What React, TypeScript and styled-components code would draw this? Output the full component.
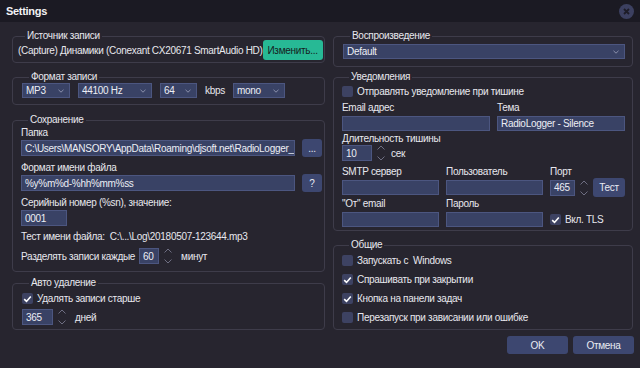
import React from 'react';
import styled, { createGlobalStyle } from 'styled-components';

const GlobalStyle = createGlobalStyle`
  html, body {
    margin: 0;
    padding: 0;
    background: #27252f;
  }
  body {
    font-family: 'Liberation Sans', Arial, sans-serif;
    font-size: 10px;
    letter-spacing: -0.3px;
    color: #e8e8ee;
  }
`;

const Window = styled.div`
  width: 640px;
  height: 368px;
  display: flex;
  flex-direction: column;
  background: #27252f;
  overflow: hidden;
`;

const TitleBar = styled.div`
  height: 22px;
  flex: none;
  display: flex;
  align-items: center;
  justify-content: space-between;
  padding: 0 6px 0 6px;
  background: #1b1a23;
`;

const Title = styled.span`
  font-size: 11px;
  font-weight: bold;
  letter-spacing: -0.3px;
  color: #f2f2f5;
`;

const CloseButton = styled.div`
  width: 15px;
  height: 15px;
  border-radius: 50%;
  background: #3c4060;
  display: flex;
  align-items: center;
  justify-content: center;
`;

const Content = styled.div`
  display: flex;
  gap: 8px;
  padding: 9px 7px 0 12px;
`;

const Column = styled.div<{ $w: number }>`
  width: ${(p) => p.$w}px;
  flex: none;
  display: flex;
  flex-direction: column;
`;

const Group = styled.fieldset<{ $mt?: number; $pad: string }>`
  margin: ${(p) => p.$mt ?? 0}px 0 0 0;
  padding: ${(p) => p.$pad};
  border: 1px solid #3e3c4a;
  border-radius: 4px;
  min-width: 0;
`;

const Legend = styled.legend`
  padding: 0 2px;
  margin-left: 7px;
  line-height: 10px;
  color: #e8e8ee;
`;

const Row = styled.div<{ $gap?: number; $mt?: number; $h?: number }>`
  display: flex;
  align-items: center;
  gap: ${(p) => p.$gap ?? 0}px;
  margin-top: ${(p) => p.$mt ?? 0}px;
  ${(p) => (p.$h ? `height: ${p.$h}px;` : '')}
`;

const Label = styled.div<{ $mt?: number }>`
  line-height: 13px;
  margin-top: ${(p) => p.$mt ?? 0}px;
  white-space: nowrap;
`;

const Text = styled.span<{ $ml?: number }>`
  margin-left: ${(p) => p.$ml ?? 0}px;
  line-height: 13px;
  white-space: nowrap;
`;

const Spacer = styled.div`
  flex: 1;
`;

const Field = styled.div<{ $w?: number; $h?: number; $mt?: number }>`
  box-sizing: border-box;
  ${(p) => (p.$w ? `width: ${p.$w}px; flex: none;` : 'flex: 1; min-width: 0;')}
  height: ${(p) => p.$h ?? 16}px;
  margin-top: ${(p) => p.$mt ?? 0}px;
  background: #394265;
  border: 1px solid #4c5680;
  padding: 0 3px;
  display: flex;
  align-items: center;
  color: #eceef4;
  white-space: nowrap;
  overflow: hidden;
`;

const SelectBox = styled(Field)`
  justify-content: space-between;
  padding: 0 5px 0 3px;
`;

const Button = styled.div<{ $w: number; $h: number; $teal?: boolean }>`
  width: ${(p) => p.$w}px;
  height: ${(p) => p.$h}px;
  flex: none;
  border-radius: 3px;
  background: ${(p) => (p.$teal ? '#27b995' : '#3d4770')};
  color: ${(p) => (p.$teal ? '#16201d' : '#e8eaf2')};
  display: flex;
  align-items: center;
  justify-content: center;
`;

const Arrows = styled.div`
  width: 8px;
  height: 16px;
  margin-left: 5px;
  display: flex;
  flex-direction: column;
  justify-content: space-between;
  align-items: center;
  flex: none;
`;

const Box = styled.div`
  width: 11px;
  height: 11px;
  border-radius: 2px;
  background: #3d4262;
  flex: none;
  display: flex;
  align-items: center;
  justify-content: center;
`;

const FieldGrid = styled.div<{ $cols: string; $mt?: number }>`
  display: grid;
  grid-template-columns: ${(p) => p.$cols};
  column-gap: 7px;
  align-items: center;
  margin-top: ${(p) => p.$mt ?? 0}px;
`;

const Footer = styled.div`
  display: flex;
  justify-content: flex-end;
  gap: 5px;
  padding: 6px 6px 0 0;
`;

const Chevron = () => (
  <svg width="6" height="4" viewBox="0 0 6 4">
    <path d="M0.5 0.8 L3 3.2 L5.5 0.8" stroke="#8a90ab" strokeWidth="1" fill="none" />
  </svg>
);

const Spinner = ({ value, w }: { value: string; w: number }) => (
  <>
    <Field $w={w}>{value}</Field>
    <Arrows>
      <svg width="8" height="5" viewBox="0 0 8 5">
        <path d="M0.5 4.5 L4 1 L7.5 4.5" stroke="#6e6e82" strokeWidth="1" fill="none" />
      </svg>
      <svg width="8" height="5" viewBox="0 0 8 5">
        <path d="M0.5 0.5 L4 4 L7.5 0.5" stroke="#6e6e82" strokeWidth="1" fill="none" />
      </svg>
    </Arrows>
  </>
);

const Check = ({ on }: { on?: boolean }) => (
  <Box>
    {on && (
      <svg width="9" height="8" viewBox="0 0 9 8">
        <path d="M1.2 4.2 L3.5 6.4 L7.8 1.4" stroke="#ffffff" strokeWidth="1.6" fill="none" />
      </svg>
    )}
  </Box>
);

const Select = ({ value, w }: { value: string; w?: number }) => (
  <SelectBox $w={w} $h={15}>
    <span>{value}</span>
    <Chevron />
  </SelectBox>
);

const App: React.FC = () => {
  return (
    <Window>
      <GlobalStyle />
      <TitleBar>
        <Title>Settings</Title>
        <CloseButton>
          <svg width="7" height="7" viewBox="0 0 7 7">
            <path d="M1 1 L6 6 M6 1 L1 6" stroke="#1d1c27" strokeWidth="1.8" />
          </svg>
        </CloseButton>
      </TitleBar>
      <Content>
        <Column $w={313}>
          <Group $pad="0 2px 2px 5px">
            <Legend>Источник записи</Legend>
            <Row $mt={-1}>
              <Text>(Capture) Динамики (Conexant CX20671 SmartAudio HD)</Text>
              <Spacer />
              <Button $w={60} $h={20} $teal>
                Изменить...
              </Button>
            </Row>
          </Group>

          <Group $mt={9} $pad="1px 8px 6px 9px">
            <Legend>Формат записи</Legend>
            <Row $gap={8}>
              <Select value="MP3" w={48} />
              <Select value="44100 Hz" w={74} />
              <Select value="64" w={37} />
              <Text>kbps</Text>
              <Select value="mono" w={52} />
            </Row>
          </Group>

          <Group $mt={10} $pad="1px 2px 7px 8px">
            <Legend>Сохранение</Legend>
            <Label>Папка</Label>
            <Row $gap={7} $h={18}>
              <Field>C:\Users\MANSORY\AppData\Roaming\djsoft.net\RadioLogger_1192</Field>
              <Button $w={20} $h={18}>
                ...
              </Button>
            </Row>
            <Label $mt={4}>Формат имени файла</Label>
            <Row $gap={7} $h={18}>
              <Field>%y%m%d-%hh%mm%ss</Field>
              <Button $w={20} $h={18}>
                ?
              </Button>
            </Row>
            <Label $mt={4}>Серийный номер (%sn), значение:</Label>
            <Field $w={46} $mt={1}>
              0001
            </Field>
            <Label $mt={4}>Тест имени файла:&nbsp; C:\...\Log\20180507-123644.mp3</Label>
            <Row $mt={5}>
              <Text>Разделять записи каждые</Text>
              <Text $ml={4} />
              <Spinner value="60" w={20} />
              <Text $ml={9}>минут</Text>
            </Row>
          </Group>

          <Group $mt={6} $pad="4px 2px 4px 9px">
            <Legend>Авто удаление</Legend>
            <Row $gap={4}>
              <Check on />
              <Text>Удалять записи старше</Text>
            </Row>
            <Row $mt={4}>
              <Spinner value="365" w={31} />
              <Text $ml={9}>дней</Text>
            </Row>
          </Group>
        </Column>

        <Column $w={300}>
          <Group $pad="3px 7px 7px 9px">
            <Legend>Воспроизведение</Legend>
            <Select value="Default" />
          </Group>

          <Group $mt={5} $pad="3px 7px 3px 8px">
            <Legend>Уведомления</Legend>
            <Row $gap={4}>
              <Check />
              <Text>Отправлять уведомление при тишине</Text>
            </Row>
            <FieldGrid $cols="148px 1fr" $mt={3}>
              <Label>Email адрес</Label>
              <Label>Тема</Label>
              <Field $h={15} $mt={2} />
              <Field $h={15} $mt={2}>
                RadioLogger - Silence
              </Field>
            </FieldGrid>
            <Label $mt={1}>Длительность тишины</Label>
            <Row>
              <Spinner value="10" w={30} />
              <Text $ml={6}>сек</Text>
            </Row>
            <FieldGrid $cols="97px 97px 1fr" $mt={4}>
              <Label>SMTP сервер</Label>
              <Label>Пользователь</Label>
              <Label>Порт</Label>
              <Field $h={15} />
              <Field $h={15} />
              <Row>
                <Spinner value="465" w={25} />
                <Spacer />
                <Button $w={32} $h={19}>
                  Тест
                </Button>
              </Row>
              <Label>"От" email</Label>
              <Label>Пароль</Label>
              <div />
              <Field $h={15} $mt={2} />
              <Field $h={15} $mt={2} />
              <Row $gap={4} $mt={2}>
                <Check on />
                <Text>Вкл. TLS</Text>
              </Row>
            </FieldGrid>
          </Group>

          <Group $mt={9} $pad="1px 7px 2px 8px">
            <Legend>Общие</Legend>
            <Row $gap={4} $h={19}>
              <Check />
              <Text>Запускать с&nbsp; Windows</Text>
            </Row>
            <Row $gap={4} $h={19}>
              <Check on />
              <Text>Спрашивать при закрытии</Text>
            </Row>
            <Row $gap={4} $h={19}>
              <Check on />
              <Text>Кнопка на панели задач</Text>
            </Row>
            <Row $gap={4} $h={19}>
              <Check />
              <Text>Перезапуск при зависании или ошибке</Text>
            </Row>
          </Group>
        </Column>
      </Content>
      <Footer>
        <Button $w={61} $h={18}>
          OK
        </Button>
        <Button $w={61} $h={18}>
          Отмена
        </Button>
      </Footer>
    </Window>
  );
};

export default App;
